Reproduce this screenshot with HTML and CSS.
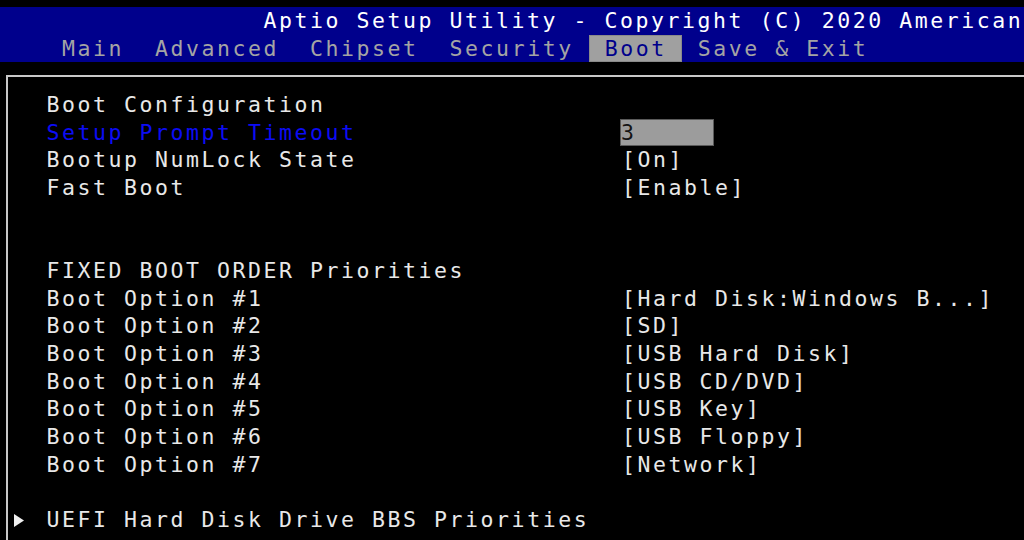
FILE: index.html
```html
<!DOCTYPE html>
<html lang="en">

<head>
    <meta charset="UTF-8">
    <meta name="viewport" content="width=device-width, initial-scale=1.0">
    <title>Aptio Setup Utility - Boot</title>
    <link rel="stylesheet" href="styles.css">
</head>

<body>
    <div class="screen">
        <div class="topbar">
            <div class="title">Aptio Setup Utility - Copyright (C) 2020 American</div>
            <div class="tabs">
                <span class="tab">Main</span>
                <span class="tab">Advanced</span>
                <span class="tab">Chipset</span>
                <span class="tab">Security</span>
                <span class="tab active">Boot</span>
                <span class="tab">Save &amp; Exit</span>
            </div>
        </div>

        <div class="panel">
            <div class="row"><span class="mark"></span><span class="label">Boot Configuration</span><span class="value"></span></div>
            <div class="row"><span class="mark"></span><span class="label selected">Setup Prompt Timeout</span><span class="value"><span class="field">3</span></span></div>
            <div class="row"><span class="mark"></span><span class="label">Bootup NumLock State</span><span class="value">[On]</span></div>
            <div class="row"><span class="mark"></span><span class="label">Fast Boot</span><span class="value">[Enable]</span></div>
            <div class="row"></div>
            <div class="row"></div>
            <div class="row"><span class="mark"></span><span class="label">FIXED BOOT ORDER Priorities</span><span class="value"></span></div>
            <div class="row"><span class="mark"></span><span class="label">Boot Option #1</span><span class="value">[Hard Disk:Windows B...]</span></div>
            <div class="row"><span class="mark"></span><span class="label">Boot Option #2</span><span class="value">[SD]</span></div>
            <div class="row"><span class="mark"></span><span class="label">Boot Option #3</span><span class="value">[USB Hard Disk]</span></div>
            <div class="row"><span class="mark"></span><span class="label">Boot Option #4</span><span class="value">[USB CD/DVD]</span></div>
            <div class="row"><span class="mark"></span><span class="label">Boot Option #5</span><span class="value">[USB Key]</span></div>
            <div class="row"><span class="mark"></span><span class="label">Boot Option #6</span><span class="value">[USB Floppy]</span></div>
            <div class="row"><span class="mark"></span><span class="label">Boot Option #7</span><span class="value">[Network]</span></div>
            <div class="row"></div>
            <div class="row">
                <span class="mark">
                    <svg width="10" height="13" viewBox="0 0 10 13"><path d="M0 0 L10 6.5 L0 13 Z" fill="#f0f0f0"/></svg>
                </span>
                <span class="label">UEFI Hard Disk Drive BBS Priorities</span>
                <span class="value"></span>
            </div>
        </div>
    </div>
</body>

</html>
```

FILE: styles.css
```css
body {
    margin: 0;
    padding: 0;
    background-color: #000;
    font-family: "DejaVu Sans Mono", "Liberation Mono", monospace;
    font-size: 21.5px;
    letter-spacing: 2.56px;
    color: #e8e8e8;
    overflow: hidden;
}

.screen {
    width: 1024px;
    height: 540px;
    overflow: hidden;
    padding-top: 7px;
    box-sizing: border-box;
}

.topbar {
    background-color: #00008c;
}

.title {
    height: 27.7px;
    line-height: 27.7px;
    padding-left: 263.5px;
    color: #fff;
    white-space: nowrap;
}

.tabs {
    display: flex;
    padding-left: 46.5px;
    white-space: nowrap;
}

.tab {
    display: block;
    height: 27.7px;
    line-height: 27.7px;
    padding: 0 15.5px;
    color: #a4a4a4;
}

.tab.active {
    background-color: #a0a0a0;
    color: #00008c;
    box-shadow: inset 0 0 0 1px #8a8a8a;
}

.panel {
    margin: 13px 0 0 6px;
    border-top: 2px solid #c8c8c8;
    border-left: 2px solid #c8c8c8;
    padding: 13.5px 0 0 7.5px;
    height: 600px;
}

.row {
    display: grid;
    grid-template-columns: 31px 573.5px auto;
    height: 27.7px;
    line-height: 27.7px;
    white-space: nowrap;
}

.mark {
    display: flex;
    align-items: center;
    margin-left: -2px;
}

.label.selected {
    color: #0c0cf4;
}

.value {
    padding-left: 2px;
}

.field {
    display: block;
    width: 94px;
    height: 27.7px;
    margin-left: -2px;
    box-sizing: border-box;
    border: 1px solid #5a5a5a;
    background-color: #9c9c9c;
    color: #141414;
    line-height: 25.7px;
}
```
